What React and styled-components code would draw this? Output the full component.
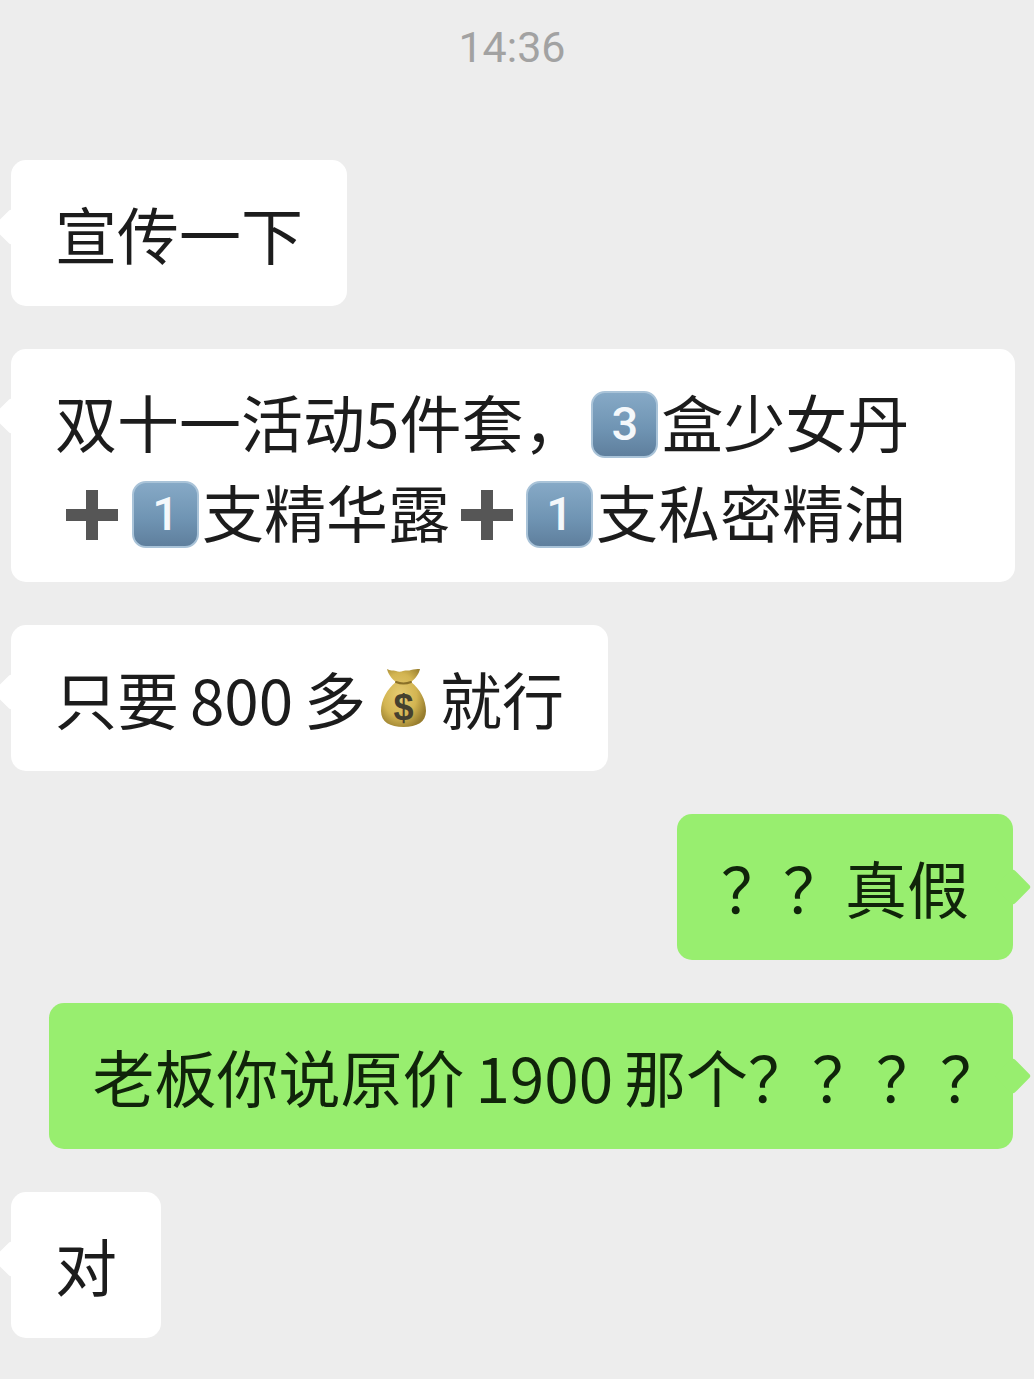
import styled, { createGlobalStyle } from "styled-components";

const GlobalStyle = createGlobalStyle`
  html, body {
    margin: 0;
    padding: 0;
    background: #ededed;
    overflow: hidden;
  }
`;

const Page = styled.main`
  width: 1034px;
  height: 1379px;
  overflow: hidden;
  background: #ededed;
  display: flex;
  flex-direction: column;
  font-family: "Noto Sans CJK SC", "Roboto", sans-serif;
`;

const Time = styled.div`
  height: 94px;
  margin-bottom: 66px;
  line-height: 94px;
  padding-right: 10px;
  box-sizing: border-box;
  text-align: center;
  font-family: "Roboto", sans-serif;
  font-size: 43px;
  color: #a2a2a2;
`;

const Messages = styled.section`
  display: flex;
  flex-direction: column;
  gap: 43px;
`;

const Row = styled.div`
  display: flex;
  justify-content: ${(p) => (p.$mine ? "flex-end" : "flex-start")};
  padding: ${(p) => (p.$mine ? "0 21px 0 0" : "0 0 0 11px")};
`;

const Bubble = styled.div`
  position: relative;
  box-sizing: border-box;
  width: ${(p) => p.$width || "auto"};
  padding: ${(p) => p.$padding || "28px 44px"};
  border-radius: 15px;
  background: ${(p) => (p.$mine ? "#98ee6f" : "#ffffff")};
  color: ${(p) => (p.$mine ? "#10240a" : "#1c1c1c")};
  font-size: 62px;
  line-height: 90px;
  word-spacing: -3px;
  white-space: nowrap;

  &::before {
    content: "";
    position: absolute;
    top: ${(p) => (p.$mine ? "60px" : "54px")};
    ${(p) => (p.$mine ? "right: -13px;" : "left: -13px;")}
    width: 26px;
    height: 26px;
    border-radius: 3px;
    background: inherit;
    transform: rotate(45deg);
  }
`;

const Keycap = styled.span`
  display: inline-block;
  overflow: hidden;
  box-sizing: border-box;
  width: 67px;
  height: 67px;
  margin: 0 3px 0 ${(p) => p.$left || "0"};
  vertical-align: -10px;
  border-radius: 14px;
  border: 2px solid #a9c3d8;
  background: linear-gradient(180deg, #86a9c6 0%, #7095b4 55%, #5f7f9d 100%);
  color: #f4f8fb;
  font-family: "Roboto", sans-serif;
  font-weight: 500;
  font-size: 47px;
  line-height: 61px;
  text-align: center;
`;

const Marks = styled.span`
  letter-spacing: 2px;
`;

const InlineIcon = styled.svg`
  display: inline-block;
  vertical-align: ${(p) => p.$align || "-6px"};
  margin: ${(p) => p.$margin || "0"};
`;

function Plus({ margin }) {
  return (
    <InlineIcon width="52" height="50" viewBox="0 0 52 50" $margin={margin} $align="-2px">
      <path d="M20 0h12v19h20v12H32v19H20V31H0V19h20z" fill="#565656" />
    </InlineIcon>
  );
}

function MoneyBag() {
  return (
    <InlineIcon width="47" height="60" viewBox="0 0 47 60" $margin="0 13px 0 14px" $align="-3px">
      <defs>
        <radialGradient id="bag" cx="0.42" cy="0.45" r="0.62">
          <stop offset="0" stopColor="#e6cb72" />
          <stop offset="0.6" stopColor="#d3b552" />
          <stop offset="1" stopColor="#977d2e" />
        </radialGradient>
      </defs>
      <path
        d="M7 1c3 2 6 1 9 2 2 1 5 1 7 0 3-1 6 0 8-1 3-1 6-1 9-1-1 5-5 10-9 13 9 7 15 18 15 29 0 11-9 16-22.500 16S1 54 1 43c0-11 6-22 15-29C12 11 8 6 7 1z"
        fill="url(#bag)"
      />
      <path d="M16 14c5 2 10 2 15 0" fill="none" stroke="#8a7028" strokeWidth="2" strokeLinecap="round" />
      <text x="23.500" y="52" textAnchor="middle" fontFamily="Liberation Sans, sans-serif" fontWeight="700" fontSize="36" fill="#45402f">
        $
      </text>
    </InlineIcon>
  );
}

export default function App() {
  return (
    <Page>
      <GlobalStyle />
      <Time>14:36</Time>
      <Messages>
        <Row>
          <Bubble>宣传一下</Bubble>
        </Row>
        <Row>
          <Bubble $width="1004px" $padding="27px 44px 26px">
            双十一活动5件套， <Keycap $left="-5px">3</Keycap>盒少女丹
            <br />
            <Plus margin="0 14px 0 11px" />
            <Keycap>1</Keycap>支精华露
            <Plus margin="0 13px 0 11px" />
            <Keycap>1</Keycap>支私密精油
          </Bubble>
        </Row>
        <Row>
          <Bubble>
            只要 800 多<MoneyBag />就行
          </Bubble>
        </Row>
        <Row $mine>
          <Bubble $mine>？？真假</Bubble>
        </Row>
        <Row $mine>
          <Bubble $mine $padding="28px 9px 28px 44px">
            老板你说原价 1900 那个<Marks>？？？？</Marks>
          </Bubble>
        </Row>
        <Row>
          <Bubble>对</Bubble>
        </Row>
      </Messages>
    </Page>
  );
}
